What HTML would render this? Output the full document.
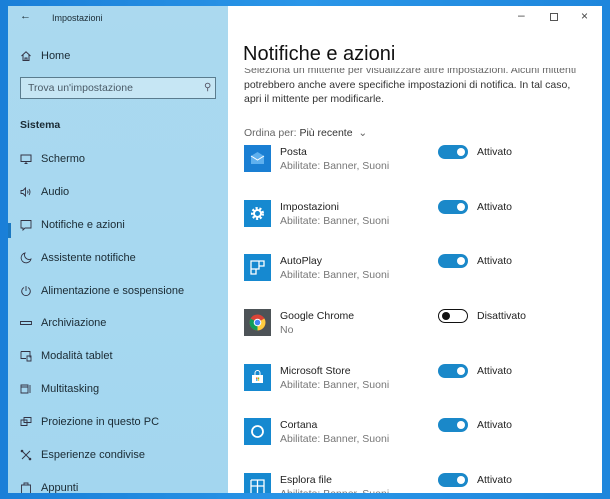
<!DOCTYPE html>
<html><head><meta charset="utf-8"><style>
*{margin:0;padding:0;box-sizing:border-box}
body{width:610px;height:499px;overflow:hidden;background:linear-gradient(90deg,#1a7fd8,#2a96e8 50%,#1e86dc);font-family:"Liberation Sans",sans-serif;position:relative}
#win{position:absolute;left:8px;top:6px;width:594px;height:487px;background:#fff;overflow:hidden}
#side{position:absolute;left:0;top:0;width:220px;height:487px;background:linear-gradient(180deg,#abd9ef,#a6d8f0 60%,#a3d6ef);color:#1a2a33}
.t{position:absolute;font-size:11px;white-space:nowrap}
.ic{position:absolute;left:12px;width:12px;height:12px}
#main{position:absolute;left:220px;top:0;width:374px;height:487px;color:#1a1a1a}
.app{position:absolute;left:16px;width:27px;height:27px;background:#1689d0}
.tg{position:absolute;left:210px;width:30px;height:14px;border-radius:7px;background:#1a88c9}
.tg::after{content:"";position:absolute;right:3px;top:3px;width:8px;height:8px;border-radius:50%;background:#fff}
.tg.off{background:#fff;border:1.5px solid #111}
.tg.off::after{left:3px;right:auto;top:2px;background:#111}
.nm{position:absolute;left:52px;font-size:10.5px;color:#222}
.sb{position:absolute;left:52px;font-size:10.5px;color:#777}
.st{position:absolute;left:249px;font-size:10.5px;color:#222}
</style></head><body>
<div id="win">
<div id="side">
<div class="t" style="left:12px;top:4px;font-size:11px">&#8592;</div>
<div class="t" style="left:44px;top:7px;font-size:9px">Impostazioni</div>
<svg class="ic" style="top:44px" viewBox="0 0 12 12"><path d="M1.5 6L6 1.8 10.5 6M3 5v5.5h6V5M5 10.5V8h2v2.5" fill="none" stroke="#334" stroke-width="1"/></svg>
<div class="t" style="left:33px;top:44px">Home</div>
<div style="position:absolute;left:12px;top:71px;width:196px;height:22px;border:1px solid #5a7c8e;background:#c6e6f4"></div>
<div class="t" style="left:20px;top:76px;color:#4a5a66;font-size:10.5px">Trova un'impostazione</div>
<div class="t" style="left:196px;top:76px;color:#556;font-size:10px">&#9906;</div>
<div class="t" style="left:12px;top:113px;font-weight:bold;font-size:10.5px">Sistema</div>
<div style="position:absolute;left:0;top:217px;width:3px;height:15px;background:#1a78c2"></div>
<svg class="ic" style="top:147px" viewBox="0 0 12 12"><path d="M1 2h10v6.5H1zM4.5 10.5h3M6 8.5v2" fill="none" stroke="#334"/></svg>
<div class="t" style="left:33px;top:147px">Schermo</div>
<svg class="ic" style="top:180px" viewBox="0 0 12 12"><path d="M1 4.5h2l2.5-2.5v8L3 7.5H1zM7.5 4.5q1 1.5 0 3M9 3q2 3 0 6" fill="none" stroke="#334" stroke-width=".9"/></svg>
<div class="t" style="left:33px;top:180px">Audio</div>
<svg class="ic" style="top:213px" viewBox="0 0 12 12"><path d="M1 1.5h10v7.5H5l-2 2v-2H1z" fill="none" stroke="#334" stroke-width=".9"/></svg>
<div class="t" style="left:33px;top:213px">Notifiche e azioni</div>
<svg class="ic" style="top:246px" viewBox="0 0 12 12"><path d="M5 1a5 5 0 1 0 6 6 4.5 4.5 0 0 1-6-6z" fill="none" stroke="#334" stroke-width=".9"/></svg>
<div class="t" style="left:33px;top:246px">Assistente notifiche</div>
<svg class="ic" style="top:279px" viewBox="0 0 12 12"><path d="M4 2.5a4.3 4.3 0 1 0 4 0M6 1v5" fill="none" stroke="#334" stroke-width=".9"/></svg>
<div class="t" style="left:33px;top:279px">Alimentazione e sospensione</div>
<svg class="ic" style="top:311px" viewBox="0 0 12 12"><path d="M.5 4.5h11v3H.5z" fill="none" stroke="#334" stroke-width=".9"/></svg>
<div class="t" style="left:33px;top:311px">Archiviazione</div>
<svg class="ic" style="top:344px" viewBox="0 0 12 12"><path d="M1 1.5h9v6M1 1.5v7h5M7 6h4v5H7z" fill="none" stroke="#334" stroke-width=".9"/></svg>
<div class="t" style="left:33px;top:344px">Modalità tablet</div>
<svg class="ic" style="top:377px" viewBox="0 0 12 12"><path d="M1 2h7v8H1zM1 4h7M10 2v8" fill="none" stroke="#334" stroke-width=".9"/></svg>
<div class="t" style="left:33px;top:377px">Multitasking</div>
<svg class="ic" style="top:410px" viewBox="0 0 12 12"><path d="M4 1.5h7v5H4zM1 4h6v5.5H1z" fill="none" stroke="#334" stroke-width=".9"/></svg>
<div class="t" style="left:33px;top:410px">Proiezione in questo PC</div>
<svg class="ic" style="top:443px" viewBox="0 0 12 12"><path d="M2 2l8 8M10 2l-8 8" fill="none" stroke="#334" stroke-width=".9"/><circle cx="2" cy="2" r="1.3" fill="#334"/><circle cx="10" cy="10" r="1.3" fill="#334"/></svg>
<div class="t" style="left:33px;top:443px">Esperienze condivise</div>
<svg class="ic" style="top:476px" viewBox="0 0 12 12"><path d="M1.5 3h9v9h-9zM4 3V1h4v2" fill="none" stroke="#334" stroke-width=".9"/></svg>
<div class="t" style="left:33px;top:476px">Appunti</div>
</div>
<div id="main">
<div class="t" style="left:290px;top:2px;color:#444;font-size:12px">&#8211;</div>
<div style="position:absolute;left:322px;top:7px;width:8px;height:8px;border:1px solid #555"></div>
<div class="t" style="left:353px;top:3px;color:#444;font-size:12px">&#215;</div>
<div class="t" style="left:15px;top:37px;font-size:20px;color:#111">Notifiche e azioni</div>
<div class="t" style="left:16px;top:58px;font-size:10.5px;color:#666;clip-path:inset(4px 0 0 0)">Seleziona un mittente per visualizzare altre impostazioni. Alcuni mittenti</div>
<div class="t" style="left:16px;top:73px;font-size:10.5px;color:#333">potrebbero anche avere specifiche impostazioni di notifica. In tal caso,</div>
<div class="t" style="left:16px;top:87px;font-size:10.5px;color:#333">apri il mittente per modificarle.</div>
<div class="t" style="left:16px;top:121px;font-size:10.5px;color:#666;top:121px">Ordina per: <span style="color:#333">Più recente</span> &nbsp;&#8964;</div>

<div class="app" style="top:139px;background:#1a7fd3"><svg viewBox="0 0 27 27" width="27" height="27"><path d="M7 11l6.5-4 6.5 4v8H7z" fill="#5fb0ee"/><path d="M7 11l6.5 4 6.5-4" fill="none" stroke="#fff" stroke-width="1"/></svg></div>
<div class="nm" style="top:140px">Posta</div><div class="sb" style="top:154px">Abilitate: Banner, Suoni</div>
<div class="tg" style="top:139px"></div><div class="st" style="top:140px">Attivato</div>

<div class="app" style="top:194px"><svg viewBox="0 0 27 27" width="27" height="27"><circle cx="13.5" cy="13.5" r="5" fill="none" stroke="#fff" stroke-width="3" stroke-dasharray="2 1.6"/><circle cx="13.5" cy="13.5" r="3.5" fill="none" stroke="#fff" stroke-width="2"/></svg></div>
<div class="nm" style="top:195px">Impostazioni</div><div class="sb" style="top:209px">Abilitate: Banner, Suoni</div>
<div class="tg" style="top:194px"></div><div class="st" style="top:195px">Attivato</div>

<div class="app" style="top:248px"><svg viewBox="0 0 27 27" width="27" height="27"><path d="M7 7h8v8H7zM15 7h5v5h-5zM7 15h5v5H7z" fill="none" stroke="#fff" stroke-width="1.3"/></svg></div>
<div class="nm" style="top:249px">AutoPlay</div><div class="sb" style="top:263px">Abilitate: Banner, Suoni</div>
<div class="tg" style="top:248px"></div><div class="st" style="top:249px">Attivato</div>

<div class="app" style="top:303px;background:#4d5357"><svg viewBox="0 0 27 27" width="27" height="27"><circle cx="13.5" cy="13.5" r="8" fill="#db4437"/><path d="M13.5 13.5L6.6 9.5A8 8 0 0 0 13.5 21.5z" fill="#0f9d58"/><path d="M13.5 13.5L20.4 9.5A8 8 0 0 1 13.5 21.5z" fill="#ffcd40"/><circle cx="13.5" cy="13.5" r="3.8" fill="#fff"/><circle cx="13.5" cy="13.5" r="2.8" fill="#4285f4"/></svg></div>
<div class="nm" style="top:304px">Google Chrome</div><div class="sb" style="top:318px">No</div>
<div class="tg off" style="top:303px"></div><div class="st" style="top:304px">Disattivato</div>

<div class="app" style="top:358px"><svg viewBox="0 0 27 27" width="27" height="27"><path d="M8 11h11v8H8z" fill="#fff"/><path d="M11 11V9a2.5 2.5 0 0 1 5 0v2" fill="none" stroke="#fff"/><rect x="12" y="13.5" width="1.4" height="1.4" fill="#f25022"/><rect x="13.8" y="13.5" width="1.4" height="1.4" fill="#7fba00"/><rect x="12" y="15.3" width="1.4" height="1.4" fill="#00a4ef"/><rect x="13.8" y="15.3" width="1.4" height="1.4" fill="#ffb900"/></svg></div>
<div class="nm" style="top:359px">Microsoft Store</div><div class="sb" style="top:373px">Abilitate: Banner, Suoni</div>
<div class="tg" style="top:358px"></div><div class="st" style="top:359px">Attivato</div>

<div class="app" style="top:412px"><svg viewBox="0 0 27 27" width="27" height="27"><circle cx="13.5" cy="13.5" r="5.5" fill="none" stroke="#fff" stroke-width="1.8"/></svg></div>
<div class="nm" style="top:413px">Cortana</div><div class="sb" style="top:427px">Abilitate: Banner, Suoni</div>
<div class="tg" style="top:412px"></div><div class="st" style="top:413px">Attivato</div>

<div class="app" style="top:467px"><svg viewBox="0 0 27 27" width="27" height="27"><path d="M7 7h13v13M7 7v13M7 13h13M13.5 7v13" fill="none" stroke="#fff" stroke-width="1.3"/></svg></div>
<div class="nm" style="top:468px">Esplora file</div><div class="sb" style="top:482px">Abilitate: Banner, Suoni</div>
<div class="tg" style="top:467px"></div><div class="st" style="top:468px">Attivato</div>
</div>
</div>
</body></html>
